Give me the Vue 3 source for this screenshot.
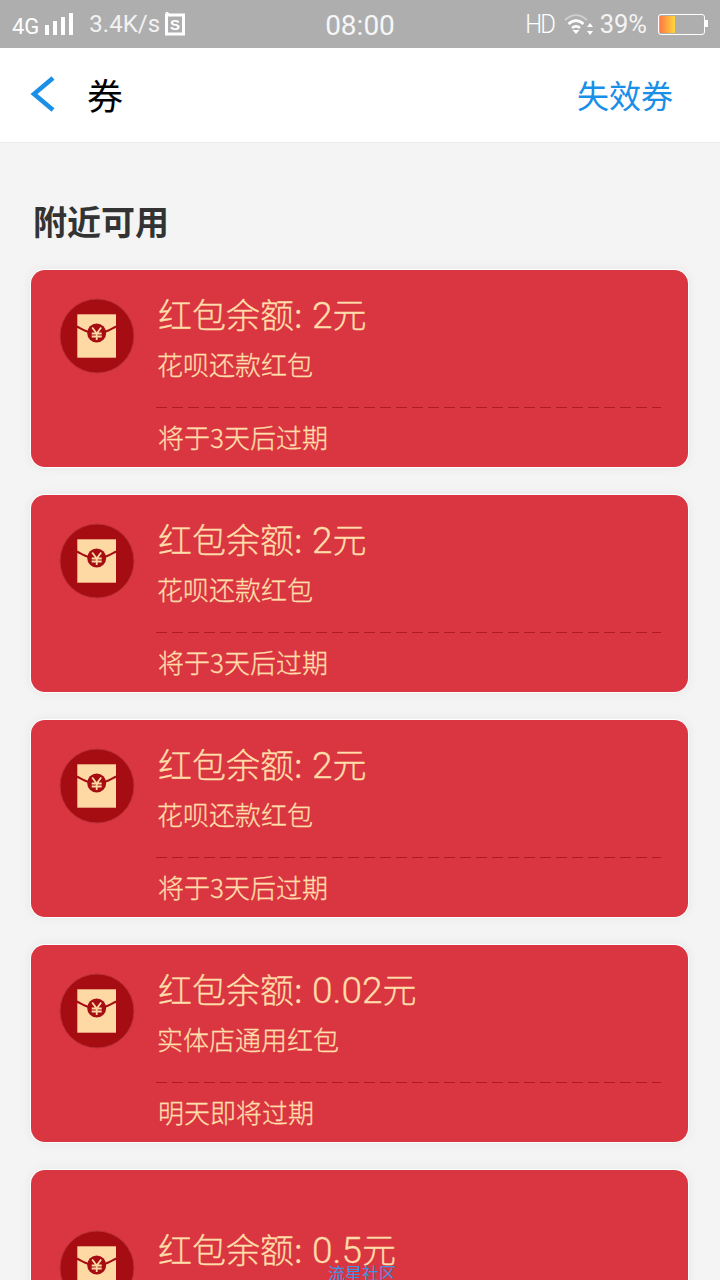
<script setup>
const cards = [
  { amount: '2', name: '花呗还款红包', expire: '将于3天后过期' },
  { amount: '2', name: '花呗还款红包', expire: '将于3天后过期' },
  { amount: '2', name: '花呗还款红包', expire: '将于3天后过期' },
  { amount: '0.02', name: '实体店通用红包', expire: '明天即将过期' },
  { amount: '0.5', name: '实体店通用红包', expire: '明天即将过期', tall: true }
]
</script>

<template>
  <div class="page">
    <header class="status">
      <div class="status-side">
        <span class="net">4G</span>
        <svg class="signal" width="30" height="24" viewBox="0 0 30 24">
          <path d="M1 13h4v10H1zM9 9h4v14H9zM17 5h4v18h-4zM25 1h4v22h-4z" fill="#fff" />
        </svg>
        <span class="speed">3.4K/s</span>
        <svg class="sim" width="20" height="24" viewBox="0 0 20 24">
          <path d="M1.500 3h17v19h-17z" fill="none" stroke="#fff" stroke-width="3" />
          <path d="M1 0l5 4" stroke="#fff" stroke-width="2" />
          <text x="10" y="18" text-anchor="middle" class="sim-s">S</text>
        </svg>
      </div>
      <span class="clock">08:00</span>
      <div class="status-side">
        <span class="hd">HD</span>
        <svg class="wifi" width="30" height="24" viewBox="0 0 30 24">
          <path d="M1 8c7-6.500 15-6.500 22 0" fill="none" stroke="#cfcfcf" stroke-width="2" />
          <path d="M4.500 12c5-4.500 10-4.500 15 0M8 16c3-2.500 5-2.500 8 0" fill="none" stroke="#fff" stroke-width="2.500" />
          <path d="M12 22l-3.500-4h7zM26 11l3 4h-6zM26 23l3-4h-6z" fill="#fff" />
        </svg>
        <span class="batt-text">39%</span>
        <div class="battery"><div class="battery-fill"></div></div>
      </div>
    </header>

    <nav class="nav">
      <svg class="back" width="26" height="36" viewBox="0 0 26 36">
        <path d="M23 2L4 18l19 16" fill="none" stroke="#1a8fe8" stroke-width="4.500" />
      </svg>
      <h1 class="nav-title">券</h1>
      <a class="nav-link">失效券</a>
    </nav>

    <main class="content">
      <h2 class="section">附近可用</h2>
      <div class="list">
        <article v-for="(c, i) in cards" :key="i" class="card" :class="{ tall: c.tall }">
          <svg class="icon" width="76" height="76" viewBox="0 0 76 76">
            <circle cx="38" cy="38" r="37" fill="#a50d13" stroke="#bb3038" stroke-width="1" />
            <rect x="18.300" y="16.300" width="38.700" height="43.400" fill="#fed9a3" />
            <path d="M18 28.500C22 30.500 26 33 30 34M45 34C49 33 53 30.500 57 28.500" fill="none" stroke="#a50d13" stroke-width="2" />
            <circle cx="37.700" cy="35" r="9.500" fill="#a50d13" />
            <path d="M33.200 29.500l4.500 6 4.500-6M32.700 35.500h10M32.700 38.500h10M37.700 35.500v6.500" fill="none" stroke="#fed9a3" stroke-width="1.800" />
          </svg>
          <div class="body">
            <div class="amount">红包余额: <span class="num">{{ c.amount }}</span>元</div>
            <div class="name">{{ c.name }}</div>
            <div class="rule"></div>
            <div class="expire">{{ c.expire }}</div>
          </div>
        </article>
      </div>
    </main>
    <span class="mark">流星社区</span>
  </div>
</template>

<style>
html, body { margin: 0; background: #f4f4f4; }
</style>

<style scoped>
.page {
  position: relative;
  width: 720px;
  height: 1280px;
  overflow: hidden;
  background: #f4f4f4;
  font-family: "Noto Sans CJK SC", "Noto Sans", sans-serif;
}
.status {
  height: 48px;
  background: #aeaeae;
  color: #fff;
  display: flex;
  align-items: center;
  justify-content: space-between;
  padding: 0 15px 0 12px;
  box-sizing: border-box;
  position: relative;
  font-family: Roboto, sans-serif;
}
.status-side { display: flex; align-items: center; }
.net { font-size: 22px; margin-top: 5px; }
.signal { margin: -1px 0 0 5px; }
.speed { font-size: 24px; margin-left: 15px; color: #f2f2f2; font-weight: 400; }
.sim { margin-left: 5px; }
.sim-s { font: 700 15px "Liberation Sans", sans-serif; fill: #fff; }
.clock {
  position: absolute;
  left: 0;
  right: 0;
  top: 9px;
  text-align: center;
  font-size: 28px;
  color: #f6f6f6;
}
.hd { font-size: 26px; font-weight: 300; letter-spacing: -2px; transform: scaleX(0.92); margin-right: -1px; }
.wifi { margin-left: 9px; }
.batt-text { font-size: 25.500px; margin-left: 6px; color: #f4f4f4; }
.battery {
  width: 43px;
  height: 17px;
  margin-left: 11px;
  border: 1px solid #fff;
  border-radius: 3px;
  position: relative;
  padding: 1px;
  box-sizing: content-box;
}
.battery::after {
  content: "";
  position: absolute;
  right: -4px;
  top: 5px;
  width: 3px;
  height: 7px;
  background: #fff;
}
.battery-fill {
  width: 15px;
  height: 100%;
  background: linear-gradient(90deg, #ff7a45, #ffd83a);
}
.nav {
  height: 95px;
  background: #fff;
  border-bottom: 1px solid #ececec;
  box-sizing: border-box;
  display: flex;
  align-items: center;
  padding: 0 47px 2px 30px;
}
.back { display: block; }
.nav-title {
  margin: 0 0 0 31px;
  font-size: 36px;
  font-weight: 400;
  color: #000;
}
.nav-link {
  margin-left: auto;
  font-size: 32px;
  color: #1a8fe8;
}
.content { padding: 0 32px 0 31px; }
.section {
  margin: 53px 0 24px 2px;
  font-size: 34px;
  line-height: 50px;
  font-weight: 700;
  color: #333;
}
.list { display: flex; flex-direction: column; gap: 28px; }
.card {
  height: 197px;
  box-sizing: border-box;
  background: #d93641;
  border-radius: 14px;
  box-shadow: 0 0 0 1px #fff, 0 0 10px 3px rgba(0, 0, 0, 0.04);
  display: flex;
  flex: none;
  align-items: flex-start;
  padding: 28px 27px 0 28px;
}
.card.tall { height: 260px; padding-top: 60px; }
.icon { flex: none; display: block; }
.body {
  flex: 1;
  min-width: 0;
  margin-left: 21px;
  margin-top: -6px;
  color: #ffddaa;
}
.card.tall .body { margin-top: -3px; }
.amount {
  font-family: "Noto Sans CJK SC", sans-serif;
  font-weight: 300;
  font-size: 34px;
  line-height: 44px;
  height: 44px;
  padding-left: 2px;
  white-space: pre;
  -webkit-text-stroke: 0.3px #ffddaa;
}
.num {
  font-family: Roboto, sans-serif;
  font-size: 37px;
  line-height: 1;
  margin-left: 2px;
}
.name {
  font-size: 26px;
  font-weight: 300;
  line-height: 36px;
  margin-top: 10px;
  padding-left: 1px;
  -webkit-text-stroke: 0.3px #ffddaa;
}
.rule {
  margin-top: 25px;
  height: 1px;
  background: repeating-linear-gradient(90deg, #b01a22 0 11px, transparent 11px 16px);
}
.expire {
  font-size: 26px;
  font-weight: 300;
  line-height: 36px;
  margin-top: 11px;
  padding-left: 2px;
  -webkit-text-stroke: 0.3px #ffddaa;
}
.mark {
  position: absolute;
  left: 328px;
  top: 1262px;
  font-size: 17px;
  line-height: 22px;
  color: #3f93e6;
}
</style>
